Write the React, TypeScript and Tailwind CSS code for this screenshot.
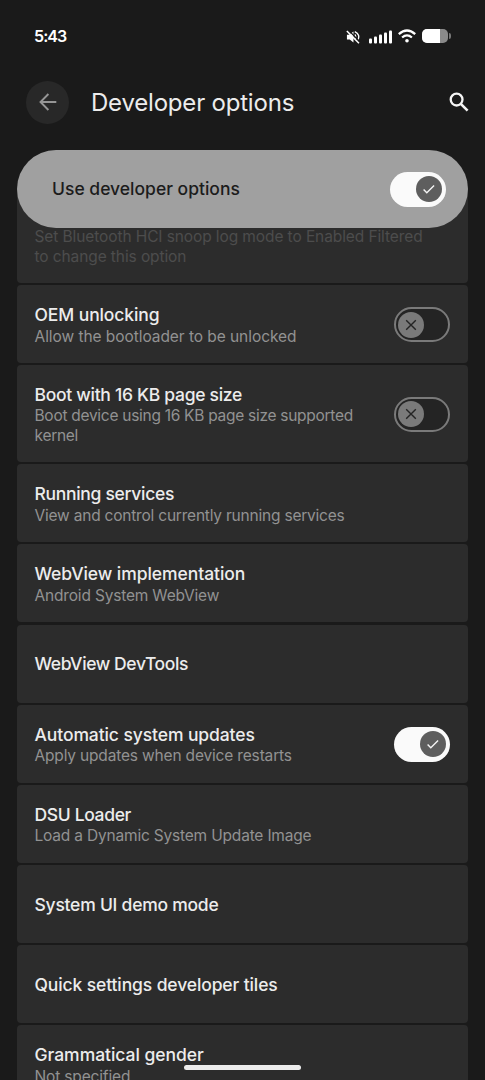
import React from 'react';

interface DeveloperOption {
  title: string;
  summary?: string;
  checked?: boolean;
  titleClass?: string;
  summaryClass?: string;
}

const options: DeveloperOption[] = [
  { title: 'OEM unlocking', summary: 'Allow the bootloader to be unlocked', checked: false, titleClass: 'tracking-[-0.1px]', summaryClass: 'tracking-[-0.06px]' },
  { title: 'Boot with 16 KB page size', summary: 'Boot device using 16 KB page size supported kernel', checked: false, titleClass: 'tracking-[-0.29px]', summaryClass: 'tracking-[-0.28px]' },
  { title: 'Running services', summary: 'View and control currently running services', titleClass: 'tracking-[-0.3px]', summaryClass: 'tracking-[-0.21px]' },
  { title: 'WebView implementation', summary: 'Android System WebView', titleClass: 'tracking-[-0.06px]', summaryClass: 'tracking-[-0.18px]' },
  { title: 'WebView DevTools', titleClass: 'tracking-[-0.4px]' },
  { title: 'Automatic system updates', summary: 'Apply updates when device restarts', checked: true, titleClass: 'tracking-[-0.1px]', summaryClass: 'tracking-[-0.17px]' },
  { title: 'DSU Loader', summary: 'Load a Dynamic System Update Image', titleClass: 'tracking-[-0.35px]', summaryClass: 'tracking-[-0.19px]' },
  { title: 'System UI demo mode', titleClass: 'tracking-[-0.24px]' },
  { title: 'Quick settings developer tiles', titleClass: 'tracking-[-0.12px]' },
  { title: 'Grammatical gender', summary: 'Not specified', titleClass: 'tracking-[-0.03px]', summaryClass: 'tracking-[-0.15px]' },
];

const Toggle: React.FC<{ checked: boolean }> = ({ checked }) => (
  <button
    role="switch"
    aria-checked={checked}
    className={`flex h-[35px] w-[56px] shrink-0 items-center rounded-full ${checked ? 'justify-end bg-[#fafafa] pr-1' : 'justify-start border-2 border-[#7a7a7a] bg-[#242424] pl-0.5'}`}
  >
    <span className={`flex size-[26px] items-center justify-center rounded-full ${checked ? 'bg-[#5e5e5e]' : 'bg-[#7a7a7a]'}`}>
      <svg viewBox="0 0 14 14" className="size-3.5" fill="none" strokeWidth="1.4">
        {checked ? <path d="M1.6 7.4l3.2 3.4 7.3-7.2" stroke="#f5f5f5" /> : <path d="M2.2 2.2l9.6 9.6M11.8 2.2l-9.6 9.6" stroke="#242424" />}
      </svg>
    </span>
  </button>
);

const StatusBar: React.FC = () => (
  <div className="flex h-[72px] shrink-0 items-center justify-between px-[34px]">
    <span className="text-base font-semibold tracking-[-0.9px] text-white">
      <span className="tracking-[-0.9px]">5:43</span>
    </span>
    <div className="flex items-center">
      {/* Muted speaker */}
      <svg viewBox="0 0 15 15" className="mt-px mr-[9px] size-3.5" fill="none" stroke="#fff">
        <path d="M1 5.2h2.4L8 1.6v11.8L4 10.2H1z" fill="#fff" stroke="none" />
        <path d="M9.4 4.8q1.8 2.1 0 5M9.4 1.8q6.4 3 3.2 9.2" strokeWidth="1.5" />
        <path d="M2.4 0l12.2 12.4" stroke="#1a1a1a" strokeWidth="1.4" />
        <path d="M.9 1l13 13.2" strokeWidth="1.6" />
      </svg>
      {/* Cellular signal */}
      <svg viewBox="0 0 23 14" className="mt-px mr-1.5 h-3.5 w-[23px]" fill="#fff">
        <rect x="0" y="8.4" width="3" height="5" rx="1" />
        <rect x="5" y="6.6" width="3" height="6.8" rx="1" />
        <rect x="10" y="4.6" width="3" height="8.8" rx="1" />
        <rect x="15" y="2.6" width="3" height="10.8" rx="1" />
        <rect x="20" y="0.4" width="3" height="13" rx="1" />
      </svg>
      <svg viewBox="0 0 18 14" className="mr-1.5 h-3.5 w-[18px]" fill="none" stroke="#fff" strokeWidth="2.3">
        <path d="M.8 5.1Q9-2.2 17.2 5.1" />
        <path d="M4.1 8.5Q9 4.2 13.9 8.5" />
        <circle cx="9" cy="11.8" r="1.8" fill="#fff" stroke="none" />
      </svg>
      <span className="flex h-3.5 w-[26px] overflow-hidden rounded-[5px] bg-[#8a8a8a]">
        <span className="h-full w-[18px] bg-white" />
      </span>
      <span className="ml-px h-1.5 w-0.5 rounded-r-full bg-[#777]" />
    </div>
  </div>
);

const OptionCard: React.FC<{ option: DeveloperOption }> = ({ option }) => (
  <div className="flex min-h-[78px] shrink-0 items-center justify-between rounded-[4px] bg-[#2c2c2c] pt-[17.7px] pr-[17.6px] pb-[16.7px] pl-[17.5px]">
    <div className="max-w-[336px]">
      <div className={`text-[17.5px] leading-[23.5px] font-medium whitespace-nowrap text-[#ececec] ${option.titleClass ?? ''}`}>{option.title}</div>
      {option.summary && <div className={`text-[15.5px] leading-[19.5px] text-[#929292] ${option.summaryClass ?? ''}`}>{option.summary}</div>}
    </div>
    {option.checked !== undefined && <Toggle checked={option.checked} />}
  </div>
);

const App: React.FC = () => {
  return (
    <div className="relative flex h-[1080px] w-[485px] flex-col overflow-hidden bg-[#1a1a1a] font-['Inter',sans-serif]">
      <StatusBar />
      <header className="flex h-[60px] shrink-0 items-center pr-4 pl-[26px]">
        <button aria-label="Back" className="mr-[22px] flex size-[43px] items-center justify-center rounded-full bg-[#282828]">
          <svg viewBox="0 0 18 18" className="size-[18px]" fill="none" stroke="#969696" strokeWidth="1.9">
            <path d="M17.3 9H1.8M9.4 1L1.5 9l7.9 8" />
          </svg>
        </button>
        <h1 className="flex-1 pt-px text-[24px] tracking-[-0.2px] text-[#ececec]">Developer options</h1>
        <svg viewBox="0 0 20 20" className="size-5" fill="none" stroke="#f5f5f5" strokeWidth="2.3">
          <circle cx="7.6" cy="7.6" r="5.9" />
          <path d="M11.8 11.8l6.8 6.8" strokeWidth="2.6" />
        </svg>
      </header>

      <main className="mt-[18px] flex flex-col px-[17px]">
        <div className="relative z-10 flex h-[78px] shrink-0 items-center justify-between rounded-full bg-[#a0a0a0] pr-[22px] pl-[35px]">
          <span className="text-[17.5px] font-medium text-[#1c1c1c]">Use developer options</span>
          <Toggle checked />
        </div>
        {/* This card is partly scrolled under the master switch */}
        <div className="-mt-[39px] mb-[2.1px] flex h-[94px] shrink-0 items-end rounded-b-[4px] bg-[#2c2c2c] px-[17.5px] pb-[16.7px]">
          <p className="w-[400px] text-[15.5px] leading-[19.5px] tracking-[-0.1px] text-[#4d4d4d]">Set Bluetooth HCI snoop log mode to Enabled Filtered to change this option</p>
        </div>
        <div className="flex flex-col gap-[2.15px]">
          {options.map(option => <OptionCard key={option.title} option={option} />)}
        </div>
      </main>

      <div className="absolute top-[1064.5px] left-[184px] z-20 h-[5px] w-[117px] rounded-full bg-[#ececec]" />
    </div>
  );
};

export default App;
